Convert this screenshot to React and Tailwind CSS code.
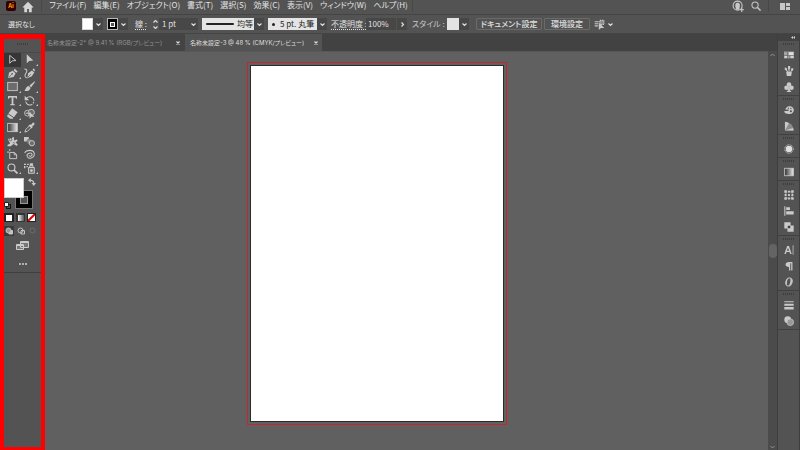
const menus = [
  'ファイル(F)',
  '編集(E)',
  'オブジェクト(O)',
  '書式(T)',
  '選択(S)',
  '効果(C)',
  '表示(V)',
  'ウィンドウ(W)',
  'ヘルプ(H)',
]

const tools = [
  { name: '選択', icon: 'select', active: true },
  { name: 'ダイレクト選択', icon: 'direct', more: true },
  { name: 'ペン', icon: 'pen', more: true },
  { name: '曲線', icon: 'curve' },
  { name: '長方形', icon: 'rect', more: true },
  { name: 'ブラシ', icon: 'brush', more: true },
  { name: '文字', icon: 'type', more: true },
  { name: '回転', icon: 'rotate', more: true },
  { name: '消しゴム', icon: 'eraser', more: true },
  { name: 'シェイプ形成', icon: 'shape' },
  { name: 'グラデーション', icon: 'gradient', more: true },
  { name: 'スポイト', icon: 'dropper' },
  { name: 'パペットワープ', icon: 'puppet' },
  { name: 'ブレンド', icon: 'blend' },
  { name: 'アートボード', icon: 'artboard' },
  { name: 'スパイラル', icon: 'spiral' },
  { name: 'ズーム', icon: 'zoom', more: true },
  { name: 'シンボルスプレー', icon: 'spray', more: true },
]

const dockGroups = [
  ['swatches', 'brushes', 'symbols'],
  ['color', 'guide'],
  ['appearance'],
  ['gradient'],
  ['transform', 'align', 'pathfinder'],
  ['character', 'paragraph', 'opentype'],
  ['stroke', 'transparency'],
]

const shapes = {
  select: <path d="M4 2v11.500l3.500-3.500 5.500-.5z" fill="none" stroke="currentColor" strokeWidth="1.400" />,
  direct: <path d="M4 .5v13l3.500-3.500 6-.5z" />,
  pen: (
    <>
      <path d="M1.500 14.500l1.500-8L8.500 4l4 4-3 5z" />
      <path d="M9.500 3.300L11.500 1 15.500 5l-2 2z" />
      <path d="M2.500 13.500L7 9" stroke="#535353" strokeWidth="1" />
      <circle cx="7.500" cy="8.500" r="1.200" fill="#535353" />
    </>
  ),
  curve: (
    <>
      <path d="M5 14.500L6 7.500 11.500 3.500l3.500 3-4 6z" />
      <path d="M12.500 2.500L14 .5l2 2.500-1 2z" />
      <path d="M5.500 13.500L10 9" stroke="#535353" strokeWidth="1" />
      <path d="M.5 1.500c5.500 0 3.500 4.500 2 6.500S.5 14.500 5 14.500" fill="none" stroke="currentColor" strokeWidth="1.500" />
    </>
  ),
  rect: <rect x="1" y="2" width="14" height="12" fill="#6c6c6c" stroke="currentColor" strokeWidth="1.300" />,
  brush: (
    <>
      <path d="M15.500.5L8 6.500l2.200 2.800L16 1.500z" />
      <path d="M7 7.300L9.500 10C8.500 14 5 15.500.5 14c2-1 2-6 6.500-6.700z" />
    </>
  ),
  type: <path d="M1.500 1.500h13V5.500h-1.500l-.5-2H9.300v9.500l2 .5V15H4.700v-1.500l2-.5V3.500H3.500L3 5.500H1.500z" />,
  rotate: (
    <>
      <path d="M4 4.500a6 6 0 1 1-1.500 5" fill="none" stroke="currentColor" strokeWidth="1.500" strokeDasharray="14 1.500 2 1.500" />
      <path d="M1 1v6.500h6.500z" />
    </>
  ),
  eraser: (
    <>
      <path d="M7.500.5l8 5.500-5.500 7.500-8-5.500z" />
      <path d="M1.500 9l7.500 5.200L8.500 15.500H4.500L0 12z" />
    </>
  ),
  shape: (
    <>
      <circle cx="5" cy="7.500" r="4.200" fill="none" stroke="currentColor" strokeWidth="1.300" />
      <circle cx="10.500" cy="6.500" r="4.600" fill="#6c6c6c" stroke="currentColor" strokeWidth="1.300" />
      <path d="M8 5v10.500l2.700-2.700 4.300.2zM2.500 6.800H8v1.500H2.500z" />
    </>
  ),
  gradient: (
    <>
      <defs>
        <linearGradient id="ramp">
          <stop offset="0" stopColor="#303030" />
          <stop offset="1" stopColor="#e8e8e8" />
        </linearGradient>
      </defs>
      <rect x="1" y="2" width="14" height="12" fill="url(#ramp)" stroke="currentColor" strokeWidth="1.300" />
    </>
  ),
  dropper: (
    <>
      <path d="M9 3.500l1.500.5L13 .8c2.500 0 2.500 2.200 2.200 2.700L12 6.500l.5 1.500-1.500 1.300L6.300 4.700z" />
      <path d="M8 5.500L2.500 11 1.300 14.700 5 13.500 10.500 8" fill="none" stroke="currentColor" strokeWidth="1.400" />
    </>
  ),
  puppet: (
    <>
      <path d="M1 4.500C3 3.500 5 4.500 6.500 7L7.500 2l2.500-.5.5 5L14.500 5l1 2-3 2.500 3 2.500-1 2.500-5-3-4 3.500H1L.5 13l4-2z" />
      <path d="M5 3a2 2 0 1 0 .1 0zM8.500 9.500l3 1" stroke="#535353" strokeWidth="1" />
    </>
  ),
  blend: (
    <>
      <rect x="0" y="1.500" width="7" height="6.500" />
      <circle cx="8" cy="8" r="3.700" fill="#8c8c8c" stroke="#535353" strokeWidth=".7" />
      <circle cx="11.500" cy="10.500" r="3.800" fill="#6c6c6c" stroke="currentColor" strokeWidth="1.400" />
    </>
  ),
  artboard: (
    <path d="M4 0v3M0 4.500h3M4 5h6.500l3.500 3v6H4zM10.500 5v3.500H14" fill="none" stroke="currentColor" strokeWidth="1.400" />
  ),
  spiral: (
    <path d="M1 6C3 1 14.500 0 15 7c.3 6.500-9 9-10.500 3.500C3.500 5.500 11.500 4.500 11.800 8c.2 3-4.300 3.500-4.300 1" fill="none" stroke="currentColor" strokeWidth="1.500" />
  ),
  zoom: (
    <>
      <circle cx="6.500" cy="6.500" r="5" fill="none" stroke="currentColor" strokeWidth="1.700" />
      <path d="M10 10l5.300 5.300" stroke="currentColor" strokeWidth="2.400" />
    </>
  ),
  spray: (
    <>
      <path d="M6.500 6.500h8.500V15H6.500zM8.500 3.500H13v3H8.500z" fill="#6c6c6c" stroke="currentColor" strokeWidth="1.400" />
      <path d="M8.500.5H13v2.500H8.500zM0 1h3v2H0zM4.500 1h2.500v2H4.500zM0 4.500h2v3H0zM3.500 4.500h2V6h-2z" />
      <circle cx="10.800" cy="11" r="2" />
    </>
  ),
  swatches: (
    <>
      <rect x="0" y="2.500" width="16" height="11" fill="#a4a4a4" />
      <path d="M8 3.500h7v5H8zM1 9.500h4V12.500H1zM10 9.500h5v3h-5z" fill="#e0e0e0" />
      <path d="M0 9h16M5.500 2.500v11M9.500 9v5" stroke="#535353" strokeWidth=".8" />
    </>
  ),
  brushes: (
    <>
      <path d="M3.500 9.500h9L11.500 16h-7z" />
      <path d="M6 10L3 5M8 10V3M10 10l3.500-4" stroke="currentColor" strokeWidth="1.700" />
      <path d="M1.500 2L4.800 4 4 7.500 1 5.500zM6.500 0H9.800v5H6.200zM12 3l3.300 1-1.500 4-2.800-1z" />
    </>
  ),
  symbols: (
    <>
      <circle cx="8" cy="4" r="3.600" />
      <circle cx="4" cy="9" r="3.600" />
      <circle cx="12" cy="9" r="3.600" />
      <path d="M6.800 7h2.400l.3 6 2.500 3H4l2.500-3z" />
    </>
  ),
  color: (
    <>
      <path d="M4 4C6 1.500 11 1 14 4c3.500 4 1.500 10-5 10.500-5.500.5-9-2-8.500-4.500C2 8.500 5 10.500 7 9 9 7 5 7 3.500 8 2 8 2 6 4 4z" />
      <circle cx="7" cy="5" r="1.100" fill="#535353" />
      <circle cx="11" cy="5.500" r="1.100" fill="#535353" />
      <circle cx="11" cy="10" r="1.700" fill="#535353" />
    </>
  ),
  guide: (
    <>
      <path d="M1.500 1v14H15.500A14 14 0 0 0 1.500 1z" fill="#8c8c8c" />
      <path d="M1.500 1v14L8 3.500A14 14 0 0 0 1.500 1zM1.500 15H15.500l-1-4z" />
    </>
  ),
  appearance: (
    <>
      <circle cx="8" cy="8" r="5.200" fill="#e0e0e0" />
      <circle cx="8" cy="8" r="6.800" fill="none" stroke="currentColor" strokeWidth="1.600" strokeDasharray="1.500 1" />
    </>
  ),
  transform: (
    <>
      <rect x="3" y="3" width="10" height="10" fill="none" stroke="currentColor" strokeWidth="1.200" strokeDasharray="2 1" />
      <path d="M.5.5H4.500v4H.5zM6.500 1h3v3h-3zM11.500.5h4v4h-4zM1 6.500h3v3H1zM12 6.500h3v3h-3zM.5 11.500h4v4h-4zM6.500 12h3v3h-3zM11.500 11.500h4v4h-4zM6.500 6.500h3v3h-3z" />
    </>
  ),
  align: <path d="M.5.5h1.700v15H.5zM3.500 2H9.500v4.500h-6zM3.500 8.500h12v5h-12z" />,
  pathfinder: (
    <>
      <path d="M.5.5h10v5h5v10h-10v-5h-5z" />
      <path d="M6 6h4v4H6z" fill="#404040" />
    </>
  ),
  character: (
    <>
      <path d="M5 1.500h3L12.300 14.500H9.900l-1-3.300H4l-1 3.300H.6zM6.400 4.200L4.700 9.300h3.500z" />
      <path d="M14.500.5v15" stroke="currentColor" strokeWidth="1.200" />
    </>
  ),
  paragraph: <path d="M13.500 1.500v13.500h-2V3.500H10v11.500H8V9.500C4.500 9.500 2.500 8 2.500 5.500s2-4 5.500-4z" />,
  opentype: (
    <>
      <ellipse cx="8" cy="8" rx="5" ry="6.800" transform="rotate(15 8 8)" fill="none" stroke="currentColor" strokeWidth="1.400" />
      <path d="M10 1.500c5 1 4 11-3 13 3-3.500 4-9 3-13zM6.500 2C1.500 5 2 11.500 5 14 4 10 5 5 6.500 2z" />
    </>
  ),
  stroke: <path d="M.5 2h15v1.500H.5zM.5 6h15v3H.5zM.5 11h15v4H.5z" />,
  transparency: (
    <>
      <circle cx="6" cy="6" r="5.500" />
      <circle cx="10" cy="10" r="5.300" fill="#989898" stroke="currentColor" strokeWidth="1.200" />
    </>
  ),
}

function Icon({ name, className }) {
  return (
    <svg className={className} viewBox="0 0 16 16" fill="currentColor" aria-hidden="true">
      {shapes[name]}
    </svg>
  )
}

function Chevron() {
  return (
    <svg className="h-[5px] w-[5px]" viewBox="0 0 10 10" fill="none" stroke="#e0e0e0" strokeWidth="2.400" aria-hidden="true">
      <path d="M1 3l4 4 4-4" />
    </svg>
  )
}

function CaretButton({ label }) {
  return (
    <button type="button" aria-label={label} className="grid h-3 w-[10px] shrink-0 place-items-center bg-[#474747]">
      <Chevron />
    </button>
  )
}

function Grip() {
  return (
    <svg className="h-[2px] w-[11px]" viewBox="0 0 11 2" aria-hidden="true">
      <path d="M0 1h11" stroke="#3e3e3e" strokeWidth="2" strokeDasharray="1 1" />
    </svg>
  )
}

function MenuBar() {
  return (
    <header className="flex h-[15px] items-start border-b border-[#444] bg-[#535353]">
      <span className="ml-[6px] mt-[1px] grid h-[10px] w-[10px] shrink-0 place-items-center rounded-[2px] bg-[#330000] text-[6px] font-bold leading-none text-[#ff9a00]">
        Ai
      </span>
      <button type="button" aria-label="ホーム" className="ml-[6px] mt-[1px] text-[#d6d6d6]">
        <svg className="h-3 w-3" viewBox="0 0 16 16" fill="currentColor">
          <path d="M8 1L.5 8.500H3V15h3.800v-4.500h2.400V15H13V8.500h2.500z" />
        </svg>
      </button>
      <span className="ml-[7px] h-3 w-px bg-[#484848]" />
      <nav className="ml-[7px] flex gap-[7px] whitespace-nowrap text-[8px] leading-[10px] text-[#e4e4e4]">
        {menus.map((menu) => (
          <button key={menu} type="button">{menu}</button>
        ))}
      </nav>
      <span className="ml-1 h-3 w-px bg-[#484848]" />
      <div className="ml-auto flex items-center text-[#c8c8c8]">
        <button type="button" aria-label="アカウント">
          <svg className="h-3 w-3" viewBox="0 0 16 16" fill="none" stroke="currentColor" strokeWidth="1.500">
            <circle cx="7.500" cy="7.500" r="6" />
            <path d="M5 13v-2.500C3.500 6 5 3.500 7.500 3.500S11.500 6 10 10.500V13z" fill="currentColor" stroke="none" />
            <path d="M13 10v6M10.500 13h5.500" />
          </svg>
        </button>
        <button type="button" aria-label="検索" className="ml-[7px]">
          <Icon name="zoom" className="h-[10px] w-[10px]" />
        </button>
        <span className="ml-[7px] h-3 w-px bg-[#484848]" />
        <button type="button" aria-label="ワークスペース" className="ml-[11px] mr-[10px]">
          <svg className="h-2 w-[10px]" viewBox="0 0 10 8" fill="currentColor">
            <path d="M0 1h5v7H0zM6 1h4v3H6zM6 5h4v3H6z" />
          </svg>
        </button>
      </div>
    </header>
  )
}

function ControlBar() {
  return (
    <section className="flex h-[19px] items-center whitespace-nowrap border-b border-[#444] bg-[#535353] text-[8px] leading-[12px] text-[#e0e0e0]">
      <span className="ml-2 w-[74px] text-[7px]">選択なし</span>
      <button type="button" aria-label="塗り" className="h-3 w-[11px] border border-[#d8d8d8] bg-white" />
      <CaretButton label="塗りのスウォッチ" />
      <button type="button" aria-label="線の色" className="ml-1 grid h-3 w-[11px] place-items-center border border-[#b8b8b8] bg-black">
        <span className="grid h-[5px] w-[5px] place-items-center border border-white bg-[#535353]" />
      </button>
      <CaretButton label="線のスウォッチ" />

      <label htmlFor="weight" className="ml-[7px] w-[16px] underline decoration-dotted underline-offset-2">線 :</label>
      <button type="button" aria-label="線幅を増減" className="grid h-3 w-2 place-items-center">
        <svg className="h-[9px] w-[5px]" viewBox="0 0 10 18" fill="none" stroke="#e0e0e0" strokeWidth="2.200">
          <path d="M1 5l4-4 4 4M1 13l4 4 4-4" />
        </svg>
      </button>
      <input id="weight" defaultValue="1 pt" className="h-3 w-[29px] bg-[#474747] pl-[3px] outline-none" />
      <CaretButton label="線幅の一覧" />

      <div className="ml-1 flex h-3 w-[52px] items-center bg-[#e4e4e4] pl-1 text-[#222]">
        <span className="h-[2px] w-[28px] rounded-full bg-[#222]" />
        <select aria-label="可変線幅プロファイル" className="ml-[3px] w-4 appearance-none leading-[12px] outline-none">
          <option>均等</option>
        </select>
      </div>
      <CaretButton label="プロファイルの一覧" />

      <div className="ml-1 flex h-3 w-[49px] items-center bg-[#e4e4e4] pl-1 text-[#222]">
        <span className="h-[3px] w-[3px] rounded-full bg-[#222]" />
        <select aria-label="ブラシ定義" className="ml-[5px] w-[36px] appearance-none leading-[12px] outline-none">
          <option>5 pt. 丸筆</option>
        </select>
      </div>
      <CaretButton label="ブラシの一覧" />

      <label htmlFor="opacity" className="ml-1 w-[35px] underline decoration-dotted underline-offset-2">不透明度 :</label>
      <input id="opacity" defaultValue="100%" className="h-3 w-[30px] bg-[#474747] pl-[2px] outline-none" />
      <button type="button" aria-label="不透明度スライダー" className="ml-px grid h-3 w-[10px] place-items-center bg-[#474747]">
        <svg className="h-[5px] w-[5px]" viewBox="0 0 10 10" fill="none" stroke="#e0e0e0" strokeWidth="2.400">
          <path d="M3 1l4 4-4 4" />
        </svg>
      </button>

      <span className="ml-[5px] w-[35px] text-[#c8c8c8]">スタイル :</span>
      <button type="button" aria-label="グラフィックスタイル" className="h-3 w-3 bg-[#e4e4e4]" />
      <CaretButton label="スタイルの一覧" />

      <button type="button" className="ml-[7px] grid h-3 w-[66px] place-items-center rounded-[1px] border border-[#6a6a6a] font-medium">
        <span className="leading-[10px]">ドキュメント設定</span>
      </button>
      <button type="button" className="ml-[2px] grid h-3 w-[46px] place-items-center rounded-[1px] border border-[#6a6a6a] font-medium">
        <span className="leading-[10px]">環境設定</span>
      </button>
      <button type="button" aria-label="類似オブジェクトを選択" className="ml-1 flex items-center gap-[3px] text-[#c8c8c8]">
        <svg className="h-[11px] w-[11px]" viewBox="0 0 16 16" fill="none" stroke="currentColor" strokeWidth="1.500">
          <path d="M1 4h6M1 7h5M1 10h5" />
          <path d="M8.500 2h6v6h-6z" fill="#8c8c8c" strokeDasharray="2 1" />
          <path d="M7 5v11l3-3h5z" fill="currentColor" stroke="none" />
        </svg>
        <Chevron />
      </button>
    </section>
  )
}

function ToolPanel() {
  return (
    <aside className="w-[45px] shrink-0 border-x-4 border-b-[3px] border-t-[5px] border-[#fe0000] bg-[#535353] text-[#cacaca]">
      <div className="flex h-[14px] justify-center border-b border-[#4a4a4a] pt-1">
        <Grip />
      </div>
      <div className="grid h-[122px] grid-cols-[17px_17px] grid-rows-9">
        {tools.map((tool) => (
          <button
            key={tool.icon}
            type="button"
            aria-label={tool.name}
            className={tool.active ? 'relative grid place-items-center bg-[#363636]' : 'relative grid place-items-center'}
          >
            <Icon name={tool.icon} className="h-[11px] w-[11px]" />
            {tool.more && (
              <svg className="absolute bottom-px right-0 h-[2px] w-[2px]" viewBox="0 0 2 2" fill="currentColor">
                <path d="M2 0v2H0z" />
              </svg>
            )}
          </button>
        ))}
      </div>

      <div className="relative mt-[3px] h-8">
        <button type="button" aria-label="線" className="absolute left-[11px] top-3 grid h-[19px] w-[18px] place-items-center border border-[#777] bg-black">
          <span className="h-2 w-2 border border-[#999] bg-[#535353]" />
        </button>
        <button type="button" aria-label="塗り" className="absolute left-0 top-0 h-5 w-5 border border-[#ccc] bg-white" />
        <button type="button" aria-label="塗りと線を入れ替え" className="absolute left-6 top-0">
          <svg className="h-2 w-2" viewBox="0 0 16 16" fill="none" stroke="currentColor" strokeWidth="2.200">
            <path d="M4 4.500c6 0 7.500 2 7.500 7" />
            <path d="M5.500 0v9L0 4.500zM7 10h9l-4.500 6z" fill="currentColor" stroke="none" />
          </svg>
        </button>
        <button type="button" aria-label="初期設定の塗りと線" className="absolute left-0 top-6 h-[7px] w-[7px]">
          <svg className="h-[7px] w-[7px]" viewBox="0 0 7 7">
            <path d="M2.500 2.500h4v4h-4z" fill="#535353" stroke="#111" />
            <path d="M.5.5h4v4h-4z" fill="#fff" stroke="#222" />
          </svg>
        </button>
      </div>

      <div className="mt-[3px] flex gap-[2px]">
        <button type="button" aria-label="カラー" className="grid h-[9px] w-[10px] place-items-center bg-[#222]">
          <span className="h-[6px] w-[6px] bg-white" />
        </button>
        <button type="button" aria-label="グラデーション" className="grid h-[9px] w-[9px] place-items-center bg-[#333]">
          <span className="h-[6px] w-[6px] bg-linear-to-r from-white to-[#555]" />
        </button>
        <button type="button" aria-label="なし" className="grid h-[9px] w-[9px] place-items-center bg-[#222]">
          <svg className="h-[7px] w-[7px] bg-white" viewBox="0 0 7 7">
            <path d="M0 7l7-7" stroke="#e60000" strokeWidth="2" />
          </svg>
        </button>
      </div>

      <div className="mt-1 flex gap-[2px]">
        {['bg-[#3a3a3a] text-[#c4c4c4]', 'text-[#c4c4c4]', 'text-[#6e6e6e]'].map((tone, i) => (
          <button key={tone} type="button" aria-label={['標準描画', '背面描画', '内側描画'][i]} className={`grid h-[10px] w-[10px] place-items-center ${tone}`}>
            <svg className="h-2 w-2" viewBox="0 0 16 16" fill="none" stroke="currentColor" strokeWidth="2">
              {i < 2 && <path d="M8 7h7v7H8z" fill={i === 0 ? 'currentColor' : '#535353'} />}
              <circle cx="7" cy="7" r="5" fill={i === 0 ? '#999' : 'none'} />
            </svg>
          </button>
        ))}
      </div>

      <div className="flex flex-col items-center border-b border-[#404040] pb-[7px] pt-[5px]">
        <button type="button" aria-label="スクリーンモード">
          <svg className="h-[10px] w-[13px]" viewBox="0 0 13 10" fill="#777" stroke="currentColor">
            <path d="M4.500.5h8v6h-8zM.5 3.500h7v5h-7z" />
            <path d="M4.500 1.500h8M.5 4.500h7" />
          </svg>
        </button>
        <button type="button" aria-label="ツールバーを編集" className="mt-3 flex gap-px">
          <span className="h-[2px] w-[2px] rounded-full bg-[#d0d0d0]" />
          <span className="h-[2px] w-[2px] rounded-full bg-[#d0d0d0]" />
          <span className="h-[2px] w-[2px] rounded-full bg-[#d0d0d0]" />
        </button>
      </div>
    </aside>
  )
}

function DocumentTab({ title, active }) {
  return (
    <div className={active ? 'flex items-center bg-[#535353] pl-[5px] pr-[2px] text-[#dedede]' : 'flex items-center bg-[#444] pl-[2px] pr-[3px] text-[#929292]'}>
      <button type="button" className={active ? 'w-[118px] text-left' : 'w-[123px] text-left'}>{title}</button>
      <button type="button" aria-label="閉じる" className="ml-1 grid h-2 w-2 place-items-center text-[#dedede]">
        <svg className="h-1 w-1" viewBox="0 0 8 8" stroke="currentColor" strokeWidth="2.200">
          <path d="M1 1l6 6M7 1L1 7" />
        </svg>
      </button>
    </div>
  )
}

function Workspace() {
  return (
    <main className="flex min-w-0 flex-1 flex-col">
      <div className="flex h-[17px] shrink-0 whitespace-nowrap bg-[#424242] font-[Inter,'Noto_Sans_CJK_JP',sans-serif] text-[6px] leading-[14px]">
        <DocumentTab title="名称未設定-2* @ 9.41 % (RGB/プレビュー)" />
        <DocumentTab title="名称未設定-3 @ 48 % (CMYK/プレビュー)" active />
      </div>
      <div className="flex flex-1">
        <div className="flex flex-1 justify-center border-t border-[#585858] bg-[#606060] pb-[25px] pr-[60px] pt-[10px]">
          <div className="flex w-[260px] border border-[#c0282e] p-[2px]">
            <div className="flex-1 border border-[#2e2a2a] bg-white" />
          </div>
        </div>
        <div className="flex w-[9px] flex-col items-center justify-between bg-[#4b4b4b] pb-px pt-[2px] text-[#929292]">
          <svg className="h-1 w-[5px]" viewBox="0 0 10 8" fill="none" stroke="currentColor" strokeWidth="2">
            <path d="M1 6l4-4 4 4" />
          </svg>
          <span className="h-[14px] w-2 rounded-full bg-[#646464]" />
          <svg className="h-1 w-[5px]" viewBox="0 0 10 8" fill="none" stroke="currentColor" strokeWidth="2">
            <path d="M1 2l4 4 4-4" />
          </svg>
        </div>
      </div>
    </main>
  )
}

function Dock() {
  return (
    <aside className="w-[23px] shrink-0 border-x border-[#3e3e3e] bg-[#535353] text-[#cacaca]">
      <button type="button" aria-label="パネルを展開" className="flex h-[7px] w-full items-center justify-end bg-[#424242] pr-1">
        <svg className="h-[3px] w-1" viewBox="0 0 8 6" fill="currentColor">
          <path d="M4 0v6L0 3zM8 0v6L4 3z" />
        </svg>
      </button>
      {dockGroups.map((group) => (
        <div key={group[0]} className="flex flex-col items-center border-b border-[#414141]">
          <div className="pb-[2px] pt-[2px]">
            <Grip />
          </div>
          {group.map((name) => (
            <button key={name} type="button" aria-label={name} className="grid h-4 w-full place-items-center">
              <Icon name={name} className="h-[10px] w-[10px]" />
            </button>
          ))}
        </div>
      ))}
    </aside>
  )
}

function App() {
  return (
    <div className="flex min-h-screen flex-col bg-[#535353] font-['Noto_Sans_CJK_JP',sans-serif] [font-feature-settings:'palt']">
      <MenuBar />
      <ControlBar />
      <div className="flex flex-1">
        <ToolPanel />
        <Workspace />
        <Dock />
      </div>
    </div>
  )
}

export default App
